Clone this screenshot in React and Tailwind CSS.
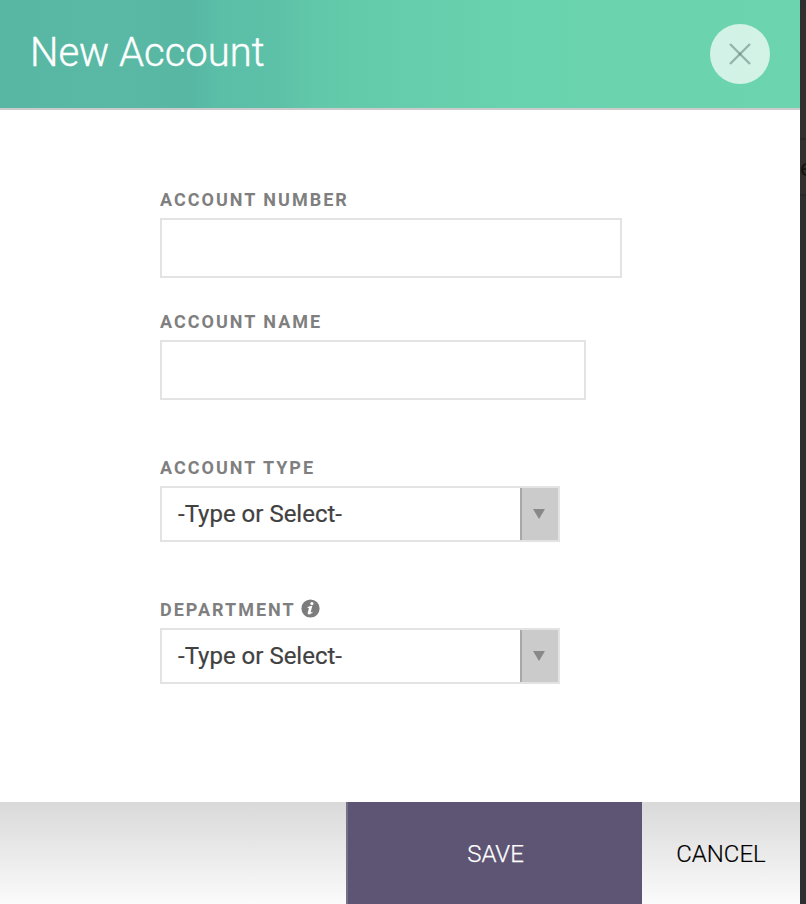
import { useState } from 'react'

function FieldLabel({ htmlFor, children }) {
  return (
    <label htmlFor={htmlFor} className="flex h-7 items-center text-[18px] font-bold uppercase leading-7 tracking-[2px] text-[#7f7f7f]">
      {children}
    </label>
  )
}

function SelectBox({ id }) {
  return (
    <button id={id} type="button" className="mt-1 flex h-14 w-[400px] border-2 border-[#e3e3e3] bg-white text-left">
      <span className="flex-1 pl-4 text-2xl leading-[52px] text-[#414141] [-webkit-text-stroke:0.2px_#414141]">-Type or Select-</span>
      <span className="flex h-full w-[38px] items-center justify-center border-l-2 border-[#a8a8a8] bg-[#cbcbcb] pr-[2px]">
        <svg width="12" height="10" viewBox="0 0 12 10" fill="#888888">
          <path d="M0 0h12L6 10z" />
        </svg>
      </span>
    </button>
  )
}

function InfoIcon() {
  return (
    <svg className="relative -top-[2px] ml-[5px]" width="19" height="19" viewBox="0 0 19 19">
      <circle cx="9.5" cy="9.5" r="9.1" fill="#7c7c7c" />
      <circle cx="10.9" cy="4.6" r="1.6" fill="#fff" />
      <path d="M6.5 8.3c1.3-.8 2.8-1.2 4.8-1.2L9.7 13c-.2.8.4.7 1.6-.2l.4.5c-1.3 1.4-2.5 2.1-3.6 2.1-1.2 0-1.6-.8-1.3-2l1-3.7c.2-.7-.2-.9-1.1-.6z" fill="#fff" />
    </svg>
  )
}

export default function NewAccount() {
  const [number, setNumber] = useState('')
  const [name, setName] = useState('')

  return (
    <div className="flex h-[904px] w-[806px] overflow-hidden bg-[#2e2e2e] font-['Roboto',sans-serif]">
      <div className="flex w-[800px] shrink-0 flex-col bg-white">
        <header className="flex h-[110px] items-center justify-between border-b-2 border-[#cbcbcb] bg-[linear-gradient(90deg,#57b7a3_0px,#59b9a5_110px,#57b7a3_190px,#5bbfa8_220px,#5dc1a8_280px,#61c7a9_310px,#65cdab_400px,#69d2ae_520px,#6cd5af_800px)] px-[30px]">
          <h1 className="relative -top-px text-[40px] font-light leading-[48px] text-white [-webkit-text-stroke:0.4px_#fff]">New Account</h1>
          <button type="button" aria-label="Close" className="flex h-[60px] w-[60px] items-center justify-center rounded-full bg-white/70">
            <svg width="22" height="22" viewBox="0 0 22 22" stroke="#47685b" strokeOpacity="0.45" strokeWidth="2.4">
              <path d="M1 1l20 20" />
              <path d="M21 1L1 21" />
            </svg>
          </button>
        </header>

        <form className="flex-1 pl-40 pt-[76px]">
          <FieldLabel htmlFor="number">Account Number</FieldLabel>
          <input id="number" value={number} onChange={(e) => setNumber(e.target.value)} className="mt-1 block h-[60px] w-[462px] border-2 border-[#e3e3e3] px-4 text-2xl outline-none" />
          <div className="mt-[30px]">
            <FieldLabel htmlFor="name">Account Name</FieldLabel>
            <input id="name" value={name} onChange={(e) => setName(e.target.value)} className="mt-1 block h-[60px] w-[426px] border-2 border-[#e3e3e3] px-4 text-2xl outline-none" />
          </div>
          <div className="mt-[54px]">
            <FieldLabel htmlFor="type">Account Type</FieldLabel>
            <SelectBox id="type" />
          </div>
          <div className="mt-[54px]">
            <FieldLabel htmlFor="department">Department <InfoIcon /></FieldLabel>
            <SelectBox id="department" />
          </div>
        </form>

        <footer className="flex h-[102px] justify-end bg-linear-to-b from-[#d9d9d9] to-[#fbfbfb] text-2xl font-light">
          <button type="button" className="w-[296px] border-l-2 border-[#77708b] bg-[#5d5573] pt-[2px] pl-px text-white [-webkit-text-stroke:0.25px_#fff]">SAVE</button>
          <button type="button" className="w-[158px] pt-[2px] text-black [-webkit-text-stroke:0.2px_#000]">CANCEL</button>
        </footer>
      </div>

      {/* sliver of the dimmed page behind the dialog */}
      <div className="w-[6px] shrink-0 overflow-hidden bg-[linear-gradient(#2e2e2e_0px,#31302e_12px,#31302e_138px,#292826_138px,#292826_140px,#31302e_140px,#31302e_194px,#292826_194px,#292826_196px,#2e2e2e_196px,#2e2e2e_840px,#2d2f31_840px)] pt-[152px]">
        <span className="block w-4 text-2xl leading-8 text-[#131313]">e</span>
      </div>
    </div>
  )
}
